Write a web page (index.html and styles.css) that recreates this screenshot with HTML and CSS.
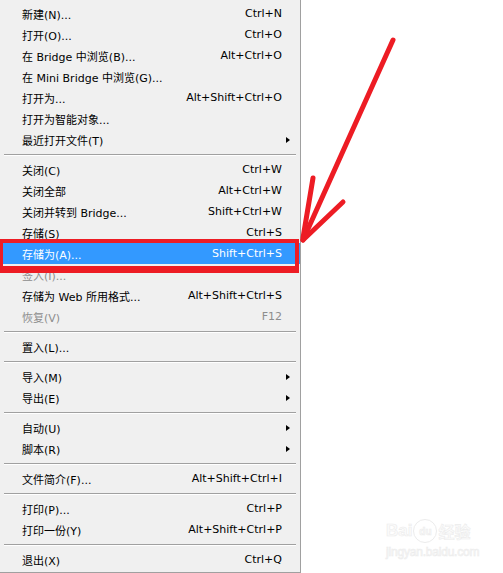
FILE: index.html
```html
<!DOCTYPE html>
<html lang="zh-CN">
<head>
    <meta charset="UTF-8" />
    <title>文件菜单</title>
    <link rel="stylesheet" href="styles.css">
</head>
<body>
    <div class="page">
        <ul class="menu">
            <li class="item"><span class="label">新建(N)...</span><span class="key">Ctrl+N</span></li>
            <li class="item"><span class="label">打开(O)...</span><span class="key">Ctrl+O</span></li>
            <li class="item"><span class="label">在 Bridge 中浏览(B)...</span><span class="key">Alt+Ctrl+O</span></li>
            <li class="item"><span class="label">在 Mini Bridge 中浏览(G)...</span></li>
            <li class="item"><span class="label">打开为...</span><span class="key">Alt+Shift+Ctrl+O</span></li>
            <li class="item"><span class="label">打开为智能对象...</span></li>
            <li class="item sub"><span class="label">最近打开文件(T)</span><span class="caret"></span></li>
            <li class="sep"></li>
            <li class="item"><span class="label">关闭(C)</span><span class="key">Ctrl+W</span></li>
            <li class="item"><span class="label">关闭全部</span><span class="key">Alt+Ctrl+W</span></li>
            <li class="item"><span class="label">关闭并转到 Bridge...</span><span class="key">Shift+Ctrl+W</span></li>
            <li class="item"><span class="label">存储(S)</span><span class="key">Ctrl+S</span></li>
            <li class="item active"><span class="label">存储为(A)...</span><span class="key">Shift+Ctrl+S</span></li>
            <li class="item disabled"><span class="label">签入(I)...</span></li>
            <li class="item"><span class="label">存储为 Web 所用格式...</span><span class="key">Alt+Shift+Ctrl+S</span></li>
            <li class="item disabled"><span class="label">恢复(V)</span><span class="key">F12</span></li>
            <li class="sep"></li>
            <li class="item"><span class="label">置入(L)...</span></li>
            <li class="sep"></li>
            <li class="item sub"><span class="label">导入(M)</span><span class="caret"></span></li>
            <li class="item sub"><span class="label">导出(E)</span><span class="caret"></span></li>
            <li class="sep"></li>
            <li class="item sub"><span class="label">自动(U)</span><span class="caret"></span></li>
            <li class="item sub"><span class="label">脚本(R)</span><span class="caret"></span></li>
            <li class="sep"></li>
            <li class="item"><span class="label">文件简介(F)...</span><span class="key">Alt+Shift+Ctrl+I</span></li>
            <li class="sep"></li>
            <li class="item"><span class="label">打印(P)...</span><span class="key">Ctrl+P</span></li>
            <li class="item"><span class="label">打印一份(Y)</span><span class="key">Alt+Shift+Ctrl+P</span></li>
            <li class="sep"></li>
            <li class="item"><span class="label">退出(X)</span><span class="key">Ctrl+Q</span></li>
        </ul>

        <!-- hand-drawn annotation -->
        <div class="callout"></div>
        <svg class="arrow" viewBox="0 0 503 573" width="503" height="573">
            <g fill="none" stroke="#ed1c24" stroke-width="5" stroke-linecap="round" stroke-linejoin="round">
                <path d="M393 40 L303 240" />
                <path d="M313 178 L303 238" />
                <path d="M343 202 L303 240" />
            </g>
        </svg>

        <div class="watermark">
            <div class="wm-logo"><span class="wm-bai">Bai</span><span class="wm-paw">du</span><span class="wm-jy">经验</span></div>
            <div class="wm-url">jingyan.baidu.com</div>
        </div>
    </div>
</body>
</html>
```

FILE: styles.css
```css
* {
    margin: 0;
    padding: 0;
    box-sizing: border-box;
}

body {
    background: #ffffff;
    font-family: 'DejaVu Sans', 'Noto Sans CJK SC', sans-serif;
    font-size: 11px;
    color: #000000;
}

.page {
    position: relative;
    width: 503px;
    height: 573px;
    overflow: hidden;
}

/* Menu */
.menu {
    list-style: none;
    width: 301px;
    background: #f0f0f0;
    border-right: 1px solid #a0a0a0;
    border-bottom: 1px solid #a0a0a0;
    padding: 3px 0 2px;
}

.item {
    height: 21px;
    display: grid;
    grid-template-columns: 1fr auto 8px;
    align-items: center;
    padding: 0 10px 0 22px;
    white-space: nowrap;
}

.item .key {
    grid-column: 2;
    text-align: right;
}

.item .caret {
    grid-column: 3;
    justify-self: end;
    width: 0;
    height: 0;
    border-left: 4px solid #000000;
    border-top: 3.5px solid transparent;
    border-bottom: 3.5px solid transparent;
}

.item.active {
    background: #3399ff;
    color: #ffffff;
}

.item.disabled {
    color: #8d8d8d;
}

.sep {
    height: 0;
    margin: 4px 4px 3px;
    border-top: 1px solid #a0a0a0;
    border-bottom: 1px solid #ffffff;
}

/* Annotation */
.callout {
    position: absolute;
    left: 0;
    top: 239px;
    width: 299px;
    height: 34px;
    border: solid #ed1c24;
    border-width: 4px 4px 7px 3px;
}

.arrow {
    position: absolute;
    left: 0;
    top: 0;
}

/* Watermark */
.watermark {
    position: absolute;
    left: 386px;
    top: 519px;
    color: #fbfbfb;
    -webkit-text-stroke: 0.6px #ececec;
}

.wm-logo {
    display: flex;
    align-items: center;
    font-family: 'Liberation Sans', sans-serif;
    font-weight: 700;
    font-size: 17px;
}

.wm-paw {
    width: 24px;
    height: 24px;
    border: 1px solid #ececec;
    border-radius: 50%;
    font-size: 10px;
    display: flex;
    align-items: center;
    justify-content: center;
    margin: 0 1px;
}

.wm-jy {
    font-family: 'Noto Sans CJK SC', sans-serif;
    font-size: 16px;
}

.wm-url {
    margin-top: 2px;
    font-family: 'Liberation Sans', sans-serif;
    font-size: 12px;
    letter-spacing: -0.2px;
}
```
